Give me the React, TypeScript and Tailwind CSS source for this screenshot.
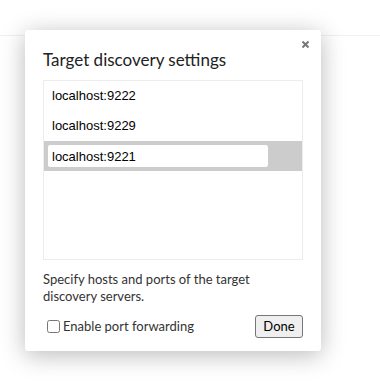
import React from "react";

export default function App() {
  const items = ["localhost:9222", "localhost:9229"];
  return (
    <div className="relative w-[380px] h-[388px] bg-white overflow-hidden">
      <div className="h-[36px] border-b border-[#f0f0f0]" />
      <div
        className="absolute left-[25px] top-[30px] w-[296px] h-[321px] bg-white rounded-[3px] shadow-[0_4px_24px_rgba(0,0,0,0.28)] px-[18px] pt-[18px] flex flex-col"
        style={{ fontFamily: 'Lato, "Open Sans", sans-serif' }}
      >
        <button className="absolute right-[12px] top-[11px] w-[7px] h-[7px] flex items-center justify-center">
          <svg width="7" height="7" viewBox="0 0 7 7">
            <path d="M0.5 0.5L6.5 6.5M6.5 0.5L0.5 6.5" stroke="#777" strokeWidth="2" />
          </svg>
        </button>
        <div className="h-[24px] leading-[24px] text-[17px] text-[#222]">Target discovery settings</div>
        <div
          className="mt-[8px] h-[180px] border border-[#ececec] flex flex-col"
          style={{ fontFamily: '"Liberation Sans", Arial, sans-serif' }}
        >
          {items.map((t) => (
            <div key={t} className="h-[30px] flex items-center pl-[8px] text-[13px] text-black">
              {t}
            </div>
          ))}
          <div className="h-[30px] bg-[#cccccc] flex items-center pl-[4px]">
            <input
              className="w-[220px] h-[22px] bg-white rounded-[2px] px-[4px] text-[13px] text-black outline-none"
              defaultValue="localhost:9221"
            />
          </div>
        </div>
        <div className="mt-[11px] text-[13px] leading-[17px] text-[#333]">
          Specify hosts and ports of the target discovery servers.
        </div>
        <div className="mt-[10px] flex items-center justify-between">
          <label className="flex items-center text-[13px] text-[#333]">
            <input type="checkbox" className="w-[13px] h-[13px] ml-[4px] mr-[3px]" />
            Enable port forwarding
          </label>
          <button className="w-[48px] h-[23px] bg-[#efefef] border border-[#767676] rounded-[3px] text-[13px] text-black">
            Done
          </button>
        </div>
      </div>
    </div>
  );
}
